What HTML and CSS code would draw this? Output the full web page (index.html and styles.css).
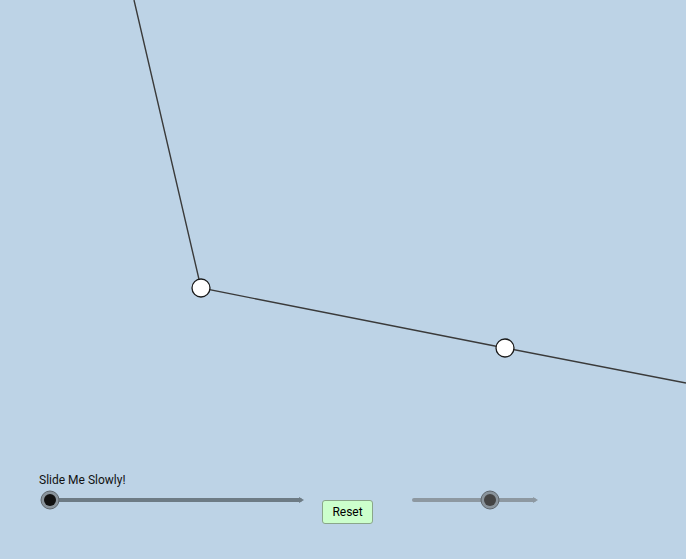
FILE: index.html
```html
<!DOCTYPE html>
<html lang="en">
<head>
  <meta charset="UTF-8">
  <title>Slide Me Slowly</title>
  <link rel="stylesheet" href="styles.css">
</head>
<body>
  <div class="board">
    <svg class="drawing" width="686" height="559" viewBox="0 0 686 559">
      <polyline class="seg" points="134,0 201,288 505,348 686,383"/>
      <circle class="pt" cx="201" cy="288" r="9"/>
      <circle class="pt" cx="505" cy="348" r="9"/>

      <!-- slider a -->
      <line class="track dark" x1="50" y1="500" x2="300" y2="500"/>
      <polygon class="arrow dark" points="299,497 304,500 299,503"/>
      <circle class="halo" cx="50" cy="500" r="9"/>
      <circle class="knob black" cx="50" cy="500" r="6"/>

      <!-- slider b -->
      <line class="track light" x1="414" y1="500" x2="534" y2="500"/>
      <polygon class="arrow light" points="533,497 538,500 533,503"/>
      <circle class="halo" cx="490" cy="500" r="9"/>
      <circle class="knob grey" cx="490" cy="500" r="6"/>
    </svg>

    <div class="caption">Slide Me Slowly!</div>
    <button class="reset">Reset</button>
  </div>
</body>
</html>
```

FILE: styles.css
```css
* {
  margin: 0;
  padding: 0;
  box-sizing: border-box;
}

body {
  background: #bdd3e6;
  font-family: Roboto, "Liberation Sans", sans-serif;
  overflow: hidden;
}

.board {
  position: relative;
  width: 686px;
  height: 559px;
}

.drawing {
  display: block;
}

.seg {
  fill: none;
  stroke: #3a3a3a;
  stroke-width: 1.4;
}

.pt {
  fill: #ffffff;
  stroke: #1a1a1a;
  stroke-width: 1.3;
}

.track {
  stroke-width: 4;
  stroke-linecap: round;
}

.track.dark { stroke: #6d7b85; }
.track.light { stroke: #8d98a1; }
.arrow.dark { fill: #6d7b85; }
.arrow.light { fill: #8d98a1; }

.halo {
  fill: #8a949c;
  stroke: #5f676d;
  stroke-width: 1;
}

.knob.black { fill: #111111; }
.knob.grey { fill: #444444; }

/* text controls placed on the board */
.caption {
  position: absolute;
  left: 39px;
  top: 473px;
  font-size: 12px;
  color: #111;
}

.reset {
  position: absolute;
  left: 322px;
  top: 500px;
  width: 51px;
  height: 24px;
  background: #ccffcc;
  border: 1px solid #8aa68a;
  border-radius: 3px;
  font-family: Roboto, "Liberation Sans", sans-serif;
  font-size: 12px;
  color: #000;
}
```
